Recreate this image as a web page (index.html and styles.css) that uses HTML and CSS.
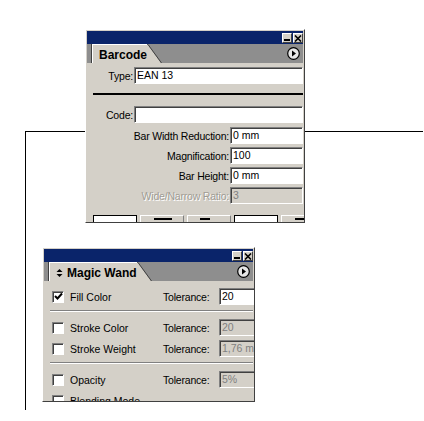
FILE: index.html
```html
<!DOCTYPE html>
<html lang="en">
<head>
  <meta charset="UTF-8" />
  <title>Palettes</title>
  <link rel="stylesheet" href="styles.css">
</head>
<body>
  <div class="stage">
    <!-- connector lines -->
    <div class="wire wire-left"></div>
    <div class="wire wire-down"></div>
    <div class="wire wire-right"></div>

    <!-- Barcode palette -->
    <div class="palette barcode">
      <div class="titlebar">
        <span class="tbtn min"><i></i></span>
        <span class="tbtn close">
          <svg width="8" height="7" viewBox="0 0 8 7"><path d="M1 0.5 L7 6.5 M7 0.5 L1 6.5" stroke="#000" stroke-width="1.6"/></svg>
        </span>
      </div>
      <div class="tabrow">
        <div class="tab">
          <span class="tab-label">Barcode</span>
          <svg class="tab-edge" width="15" height="19" viewBox="0 0 15 19"><polygon points="0,1 1,1 14,19 0,19" fill="#d4d0c8"/><path d="M0.5 0.5 L1 0.5 L14.5 19" stroke="#404040" fill="none"/></svg>
        </div>
        <span class="menu-btn">
          <svg width="13" height="13" viewBox="0 0 13 13"><circle cx="6.5" cy="6.5" r="5.8" fill="#e6e6e6" stroke="#000" stroke-width="1.2"/><polygon points="5,3.5 9,6.5 5,9.5" fill="#000"/></svg>
        </span>
      </div>
      <div class="body">
        <div class="row wide">
          <span class="lbl">Type:</span>
          <span class="field">EAN 13</span>
        </div>
        <div class="rule"></div>
        <div class="row wide">
          <span class="lbl">Code:</span>
          <span class="field"></span>
        </div>
        <div class="stack">
          <div class="row right">
            <span class="lbl">Bar Width Reduction:</span>
            <span class="field short">0 mm</span>
          </div>
          <div class="row right">
            <span class="lbl">Magnification:</span>
            <span class="field short">100</span>
          </div>
          <div class="row right">
            <span class="lbl">Bar Height:</span>
            <span class="field short">0 mm</span>
          </div>
          <div class="row right off">
            <span class="lbl">Wide/Narrow Ratio:</span>
            <span class="field short">3</span>
          </div>
        </div>
        <div class="buttons">
          <span class="btn pressed"></span>
          <span class="btn"><i class="dash mid"></i></span>
          <span class="btn"><i class="dash left"></i></span>
          <span class="btn pressed"></span>
          <span class="btn"><i class="dash mid"></i></span>
        </div>
      </div>
    </div>

    <!-- Magic Wand palette -->
    <div class="palette wand">
      <div class="titlebar">
        <span class="tbtn min"><i></i></span>
        <span class="tbtn close">
          <svg width="8" height="7" viewBox="0 0 8 7"><path d="M1 0.5 L7 6.5 M7 0.5 L1 6.5" stroke="#000" stroke-width="1.6"/></svg>
        </span>
      </div>
      <div class="tabrow">
        <div class="tab">
          <span class="tab-label">
            <svg class="updown" width="7" height="10" viewBox="0 0 7 10"><polygon points="0.5,4 3.5,1 6.5,4" fill="#000"/><polygon points="0.5,6 3.5,9 6.5,6" fill="#000"/></svg>
            Magic Wand
          </span>
          <svg class="tab-edge" width="15" height="19" viewBox="0 0 15 19"><polygon points="0,1 1,1 14,19 0,19" fill="#d4d0c8"/><path d="M0.5 0.5 L1 0.5 L14.5 19" stroke="#404040" fill="none"/></svg>
        </div>
        <span class="menu-btn">
          <svg width="13" height="13" viewBox="0 0 13 13"><circle cx="6.5" cy="6.5" r="5.8" fill="#e6e6e6" stroke="#000" stroke-width="1.2"/><polygon points="5,3.5 9,6.5 5,9.5" fill="#000"/></svg>
        </span>
      </div>
      <div class="body">
        <div class="opt">
          <span class="check">
            <svg width="9" height="9" viewBox="0 0 9 9"><path d="M1 4 L3.5 6.5 L8 1.5" stroke="#000" stroke-width="2" fill="none"/></svg>
          </span>
          <span class="opt-name">Fill Color</span>
          <span class="tol">Tolerance:</span>
          <span class="field">20</span>
        </div>
        <div class="groove"></div>
        <div class="opt">
          <span class="check"></span>
          <span class="opt-name">Stroke Color</span>
          <span class="tol">Tolerance:</span>
          <span class="field off">20</span>
        </div>
        <div class="opt">
          <span class="check"></span>
          <span class="opt-name">Stroke Weight</span>
          <span class="tol">Tolerance:</span>
          <span class="field off">1,76 mm</span>
        </div>
        <div class="groove"></div>
        <div class="opt">
          <span class="check"></span>
          <span class="opt-name">Opacity</span>
          <span class="tol">Tolerance:</span>
          <span class="field off">5%</span>
        </div>
        <div class="opt">
          <span class="check"></span>
          <span class="opt-name">Blending Mode</span>
        </div>
      </div>
    </div>
  </div>
</body>
</html>
```

FILE: styles.css
```css
* {
  margin: 0;
  padding: 0;
  box-sizing: border-box;
}
body {
  background: #fff;
  font-family: 'Liberation Sans', Arial, sans-serif;
  color: #000;
}
.stage {
  position: relative;
  width: 424px;
  height: 421px;
  overflow: hidden;
}

/* connector lines */
.wire {
  position: absolute;
  background: #000;
}
.wire-left {
  left: 25px;
  top: 131px;
  width: 61px;
  height: 1px;
}
.wire-down {
  left: 25px;
  top: 131px;
  width: 1px;
  height: 279px;
}
.wire-right {
  left: 305px;
  top: 131px;
  width: 118px;
  height: 1px;
}

/* palette window */
.palette {
  position: absolute;
  display: flex;
  flex-direction: column;
  background: #d4d0c8;
  border: 1px solid;
  border-color: #fff #404040 #404040 #fff;
  padding: 1px;
  overflow: hidden;
}
.barcode {
  left: 85px;
  top: 29px;
  width: 220px;
  height: 194px;
  font-size: 10.5px;
}
.wand {
  left: 42px;
  top: 247px;
  width: 213px;
  height: 155px;
  font-size: 10.5px;
}
.titlebar {
  height: 13px;
  flex: none;
  background: #0a246a;
  display: flex;
  justify-content: flex-end;
  align-items: flex-start;
  padding-top: 2px;
}
.tbtn {
  width: 10px;
  height: 10px;
  background: #d4d0c8;
  border: 1px solid;
  border-color: #fff #404040 #404040 #fff;
  display: flex;
  align-items: center;
  justify-content: center;
}
.tbtn.min i {
  display: block;
  width: 6px;
  height: 2px;
  background: #000;
  margin-top: 4px;
}
.tbtn.close {
  margin-left: 1px;
}
.tabrow {
  height: 19px;
  flex: none;
  background: #8e8e8e;
  display: flex;
  align-items: flex-end;
  justify-content: space-between;
  padding: 0 3px 0 5px;
}
.tab {
  display: flex;
  align-items: flex-end;
  height: 19px;
}
.tab-label {
  height: 19px;
  display: flex;
  align-items: center;
  gap: 4px;
  padding: 1px 0 0 6px;
  background: #d4d0c8;
  border-top: 1px solid #fff;
  border-left: 1px solid #fff;
  box-shadow: -1px 0 0 #404040;
  font-size: 12px;
  font-weight: bold;
}
.tab-edge {
  display: block;
}
.menu-btn {
  align-self: center;
  display: flex;
}
.menu-btn svg {
  display: block;
}

/* text fields */
.field {
  height: 17px;
  background: #fff;
  border: 1px solid;
  border-color: #808080 #fff #fff #808080;
  box-shadow: inset 1px 1px 0 #404040;
  padding: 1px 0 0 2px;
  white-space: nowrap;
  overflow: hidden;
  line-height: 13px;
}
.field.off,
.off .field {
  background: #d4d0c8;
  color: #808080;
}

/* barcode body */
.barcode .body {
  padding-top: 4px;
  display: flex;
  flex-direction: column;
}
.row {
  display: flex;
  align-items: center;
}
.row .lbl {
  padding-right: 1px;
  letter-spacing: -0.2px;
}
.row.wide .lbl {
  width: 47px;
  text-align: right;
}
.row.wide .field {
  flex: 1;
}
.row.right {
  justify-content: flex-end;
}
.field.short {
  width: 73px;
}
.off .lbl {
  color: #a09c94;
  text-shadow: 1px 1px 0 #fff;
}
.rule {
  height: 2px;
  background: #000;
  margin: 9px 0 11px 6px;
}
.stack {
  display: flex;
  flex-direction: column;
  gap: 3px;
  margin-top: 4px;
}
.buttons {
  display: flex;
  gap: 3px;
  margin: 11px 0 0 6px;
}
.btn {
  position: relative;
  width: 44px;
  height: 14px;
  flex: none;
  border: 1px solid;
  border-color: #fff #808080 #808080 #fff;
}
.btn.pressed {
  background: #fff;
  border: 1px solid #000;
}
.dash {
  position: absolute;
  top: 2px;
  height: 2px;
  background: #000;
}
.dash.mid {
  left: 13px;
  width: 18px;
}
.dash.left {
  left: 12px;
  width: 10px;
}

/* magic wand body */
.wand .body {
  padding: 7px 0 0 8px;
  display: flex;
  flex-direction: column;
}
.opt {
  display: flex;
  align-items: center;
  height: 17px;
  flex: none;
  margin-bottom: 4px;
}
.check {
  width: 12px;
  height: 12px;
  flex: none;
  background: #fff;
  border: 1px solid;
  border-color: #808080 #fff #fff #808080;
  box-shadow: inset 1px 1px 0 #404040;
  display: flex;
  align-items: center;
  justify-content: center;
}
.check svg {
  display: block;
}
.opt-name {
  width: 99px;
  padding-left: 6px;
  flex: none;
  white-space: nowrap;
}
.tol {
  width: 56px;
  flex: none;
  white-space: nowrap;
  letter-spacing: -0.2px;
}
.opt .field {
  width: 40px;
  flex: none;
}
.groove {
  height: 2px;
  flex: none;
  border-top: 1px solid #808080;
  border-bottom: 1px solid #fff;
  margin: 1px 0 7px -2px;
}
```
